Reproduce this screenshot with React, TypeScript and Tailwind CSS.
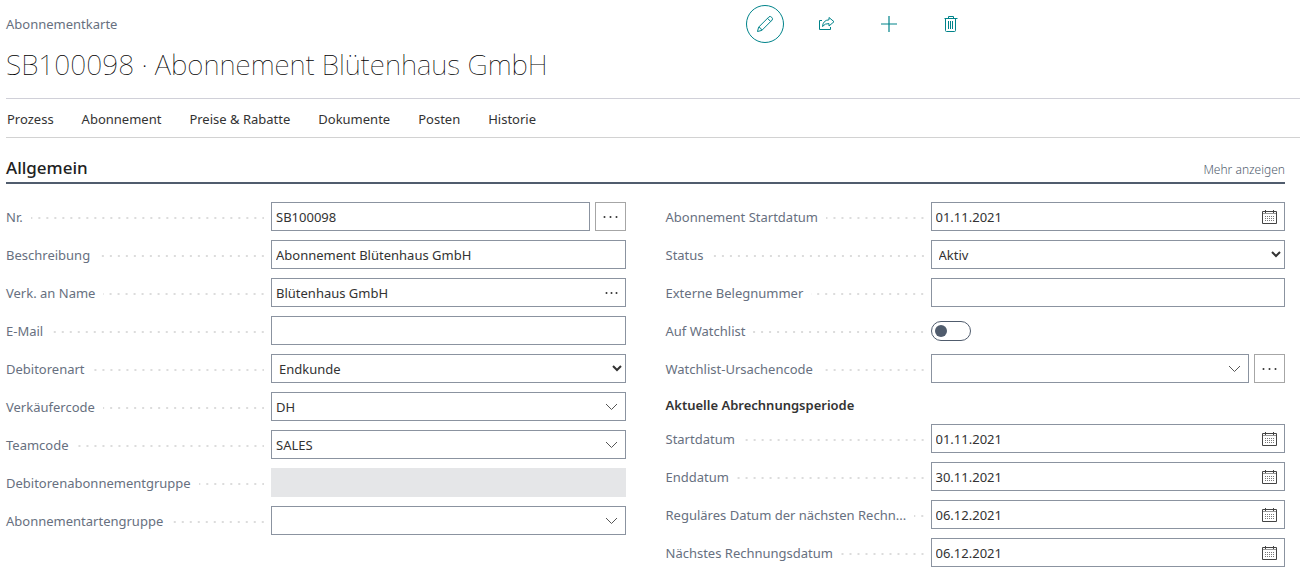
import React, { useState } from "react";

const menuItems = ["Prozess", "Abonnement", "Preise & Rabatte", "Dokumente", "Posten", "Historie"];

function PencilIcon() {
  return (
    <svg width="18" height="18" viewBox="0 0 18 18" fill="none" stroke="currentColor" strokeLinejoin="round">
      <path d="M1.5 16.5 L2.6 12.2 L13 1.8 Q14.3 0.9 15.7 2.3 Q17.1 3.7 16.2 5 L5.8 15.4 Z" />
      <path d="M2.6 12.2 Q5 12.6 5.8 15.4 M11.5 3.3 L14.7 6.5" />
    </svg>
  );
}

function ShareIcon() {
  return (
    <svg width="18" height="16" viewBox="0 0 18 16" fill="none" stroke="currentColor">
      <path d="M4 4.5 H1.5 V13.5 H12.5 V11" />
      <path d="M11 1.5 L16 5.7 L11 10 V7.6 Q7 7.2 4.5 10.5 Q5 4.2 11 3.8 Z" />
    </svg>
  );
}

function PlusIcon() {
  return (
    <svg width="18" height="18" viewBox="0 0 18 18" fill="none" stroke="currentColor">
      <path d="M9 1 V17 M1 9 H17" strokeWidth="1.2" />
    </svg>
  );
}

function TrashIcon() {
  return (
    <svg width="14" height="18" viewBox="0 0 14 18" fill="none" stroke="currentColor">
      <path d="M0.5 3.5 H13.5 M4.5 3.5 V1.5 H9.5 V3.5 M1.5 3.5 V15.5 Q1.5 16.5 2.5 16.5 H10.5 Q11.5 16.5 11.5 15.5 V3.5" />
      <path d="M4.5 6 V14 M6.5 6 V14 M8.5 6 V14" />
    </svg>
  );
}

function CalendarIcon() {
  return (
    <svg width="15" height="15" viewBox="0 0 15 15" fill="none" stroke="#444">
      <path d="M0.5 2.5 H14.5 V14.5 H0.5 Z" />
      <path d="M1 4.5 H14" stroke="#999" />
      <path d="M3.5 1 V4 M11.5 1 V4" />
      <path d="M3 7.5 H13 M3 9.5 H13 M3 11.5 H13" stroke="#777" strokeDasharray="1 1" />
    </svg>
  );
}

function ChevronIcon() {
  return (
    <svg width="13" height="9" viewBox="0 0 13 9" fill="none" stroke="#555">
      <path d="M1 2 L6.5 7.5 L12 2" />
    </svg>
  );
}

function DotsIcon({ wide }: { wide?: boolean }) {
  return (
    <svg width={wide ? 15 : 13} height="2" viewBox={wide ? "0 0 15 2" : "0 0 13 2"} fill="#333">
      <circle cx="1.5" cy="1" r="1" />
      <circle cx={wide ? 7.5 : 6.5} cy="1" r="1" />
      <circle cx={wide ? 13.5 : 11.5} cy="1" r="1" />
    </svg>
  );
}

const icons = {
  calendar: { el: <CalendarIcon />, label: "Datum auswählen" },
  chevron: { el: <ChevronIcon />, label: "Wert auswählen" },
  dots: { el: <DotsIcon />, label: "Nachschlagen" },
};

type RowProps = {
  id: string;
  label: string;
  children: React.ReactNode;
};

function Row({ id, label, children }: RowProps) {
  return (
    <div className="flex h-[29px] items-center">
      <div className="flex w-[265px] shrink-0 items-center pr-[7px]">
        <label htmlFor={id} className="whitespace-nowrap text-[#677080]">
          {label}
        </label>
        {/* dotted leader */}
        <div className="mt-[3px] ml-2 h-[2px] flex-1 bg-[linear-gradient(90deg,transparent_6px,#dcdcdc_6px)] bg-[size:8px_2px] bg-right bg-repeat-x" />
      </div>
      <div className="flex min-w-0 flex-1 items-center gap-[5px]">{children}</div>
    </div>
  );
}

type FieldProps = {
  id: string;
  label: string;
  value?: string;
  icon?: keyof typeof icons;
  assist?: boolean;
};

function Field({ id, label, value = "", icon, assist }: FieldProps) {
  const [text, setText] = useState(value);

  return (
    <Row id={id} label={label}>
      <div className="flex h-[29px] min-w-0 flex-1 items-center border border-[#8b93a0] bg-white pr-[7px] pl-1">
        <input
          id={id}
          type="text"
          value={text}
          onChange={(e) => setText(e.target.value)}
          className="h-full min-w-0 flex-1 outline-none"
        />
        {icon && (
          <button type="button" aria-label={icons[icon].label} className="shrink-0 cursor-pointer">
            {icons[icon].el}
          </button>
        )}
      </div>
      {assist && (
        <button
          type="button"
          aria-label="Bearbeiten"
          className="flex h-[29px] w-[31px] shrink-0 items-center justify-center border border-[#a6a6a6]"
        >
          <DotsIcon wide />
        </button>
      )}
    </Row>
  );
}

function SelectField({ id, label, value }: { id: string; label: string; value: string }) {
  return (
    <Row id={id} label={label}>
      <select id={id} defaultValue={value} className="h-[29px] w-full border border-[#8b93a0] bg-white pr-[2px] pl-[3px]">
        <option>{value}</option>
      </select>
    </Row>
  );
}

export default function App() {
  return (
    <main className="min-h-screen bg-white pb-5 pl-1.5 font-['Noto_Sans','Open_Sans',sans-serif] text-[13px] leading-5 text-[#333]">
      {/* Title bar */}
      <header className="border-b border-[#d0d0d8]">
        <div className="grid grid-cols-[4fr_3fr] items-center pt-[5px]">
          <span className="text-[#677080]">Abonnementkarte</span>
          <div className="flex items-center gap-6 pl-px text-[#00838a]">
            <button
              type="button"
              aria-label="Bearbeiten"
              className="flex size-[38px] items-center justify-center rounded-full border border-current"
            >
              <PencilIcon />
            </button>
            <button type="button" aria-label="Teilen" className="flex size-[38px] items-center justify-center">
              <ShareIcon />
            </button>
            <button type="button" aria-label="Neu" className="flex size-[38px] items-center justify-center">
              <PlusIcon />
            </button>
            <button type="button" aria-label="Löschen" className="flex size-[38px] items-center justify-center">
              <TrashIcon />
            </button>
          </div>
        </div>
        <h1 className="pt-px pb-[14px] text-[28px] leading-10 font-thin text-black">SB100098 · Abonnement Blütenhaus GmbH</h1>
      </header>

      {/* Menu */}
      <nav className="flex h-[39px] items-center gap-7 border-b border-[#d2d2d2] pt-px pl-px">
        {menuItems.map((item) => (
          <button key={item} type="button" className="cursor-pointer">
            {item}
          </button>
        ))}
      </nav>

      <section className="mr-[15px]">
        <div className="flex items-end justify-between border-b-2 border-[#505c6d] pt-[17px]">
          <h2 className="pb-px text-[17px] leading-[26px] font-medium text-[#212121]">Allgemein</h2>
          <button type="button" className="pb-[2px] text-[12px] font-light text-[#505c6d]">
            Mehr anzeigen
          </button>
        </div>

        <div className="grid grid-cols-2 gap-10 pt-[18px]">
          <div className="flex flex-col gap-[9px]">
            <Field id="nr" label="Nr." value="SB100098" assist />
            <Field id="beschreibung" label="Beschreibung" value="Abonnement Blütenhaus GmbH" />
            <Field id="verk-name" label="Verk. an Name" value="Blütenhaus GmbH" icon="dots" />
            <Field id="email" label="E-Mail" />
            <SelectField id="debitorenart" label="Debitorenart" value="Endkunde" />
            <Field id="verkaeufercode" label="Verkäufercode" value="DH" icon="chevron" />
            <Field id="teamcode" label="Teamcode" value="SALES" icon="chevron" />
            <Row id="debitorengruppe" label="Debitorenabonnementgruppe">
              <input id="debitorengruppe" type="text" disabled className="h-[29px] w-full bg-[#e5e6e8]" />
            </Row>
            <Field id="artengruppe" label="Abonnementartengruppe" icon="chevron" />
          </div>

          <div className="flex flex-col gap-[9px]">
            <Field id="abo-start" label="Abonnement Startdatum" value="01.11.2021" icon="calendar" />
            <SelectField id="status" label="Status" value="Aktiv" />
            <Field id="belegnummer" label="Externe Belegnummer" />
            <Row id="watchlist" label="Auf Watchlist">
              <input
                id="watchlist"
                type="checkbox"
                role="switch"
                className="flex h-5 w-10 appearance-none items-center rounded-full border border-[#505c6d] px-[3px] before:size-3 before:rounded-full before:bg-[#505c6d] checked:justify-end"
              />
            </Row>
            <Field id="ursachencode" label="Watchlist-Ursachencode" icon="chevron" assist />
            <h3 className="h-[23px] leading-[26px] font-semibold">Aktuelle Abrechnungsperiode</h3>
            <Field id="start" label="Startdatum" value="01.11.2021" icon="calendar" />
            <Field id="ende" label="Enddatum" value="30.11.2021" icon="calendar" />
            <Field id="regulaer" label="Reguläres Datum der nächsten Rechn..." value="06.12.2021" icon="calendar" />
            <Field id="naechstes" label="Nächstes Rechnungsdatum" value="06.12.2021" icon="calendar" />
          </div>
        </div>
      </section>
    </main>
  );
}
